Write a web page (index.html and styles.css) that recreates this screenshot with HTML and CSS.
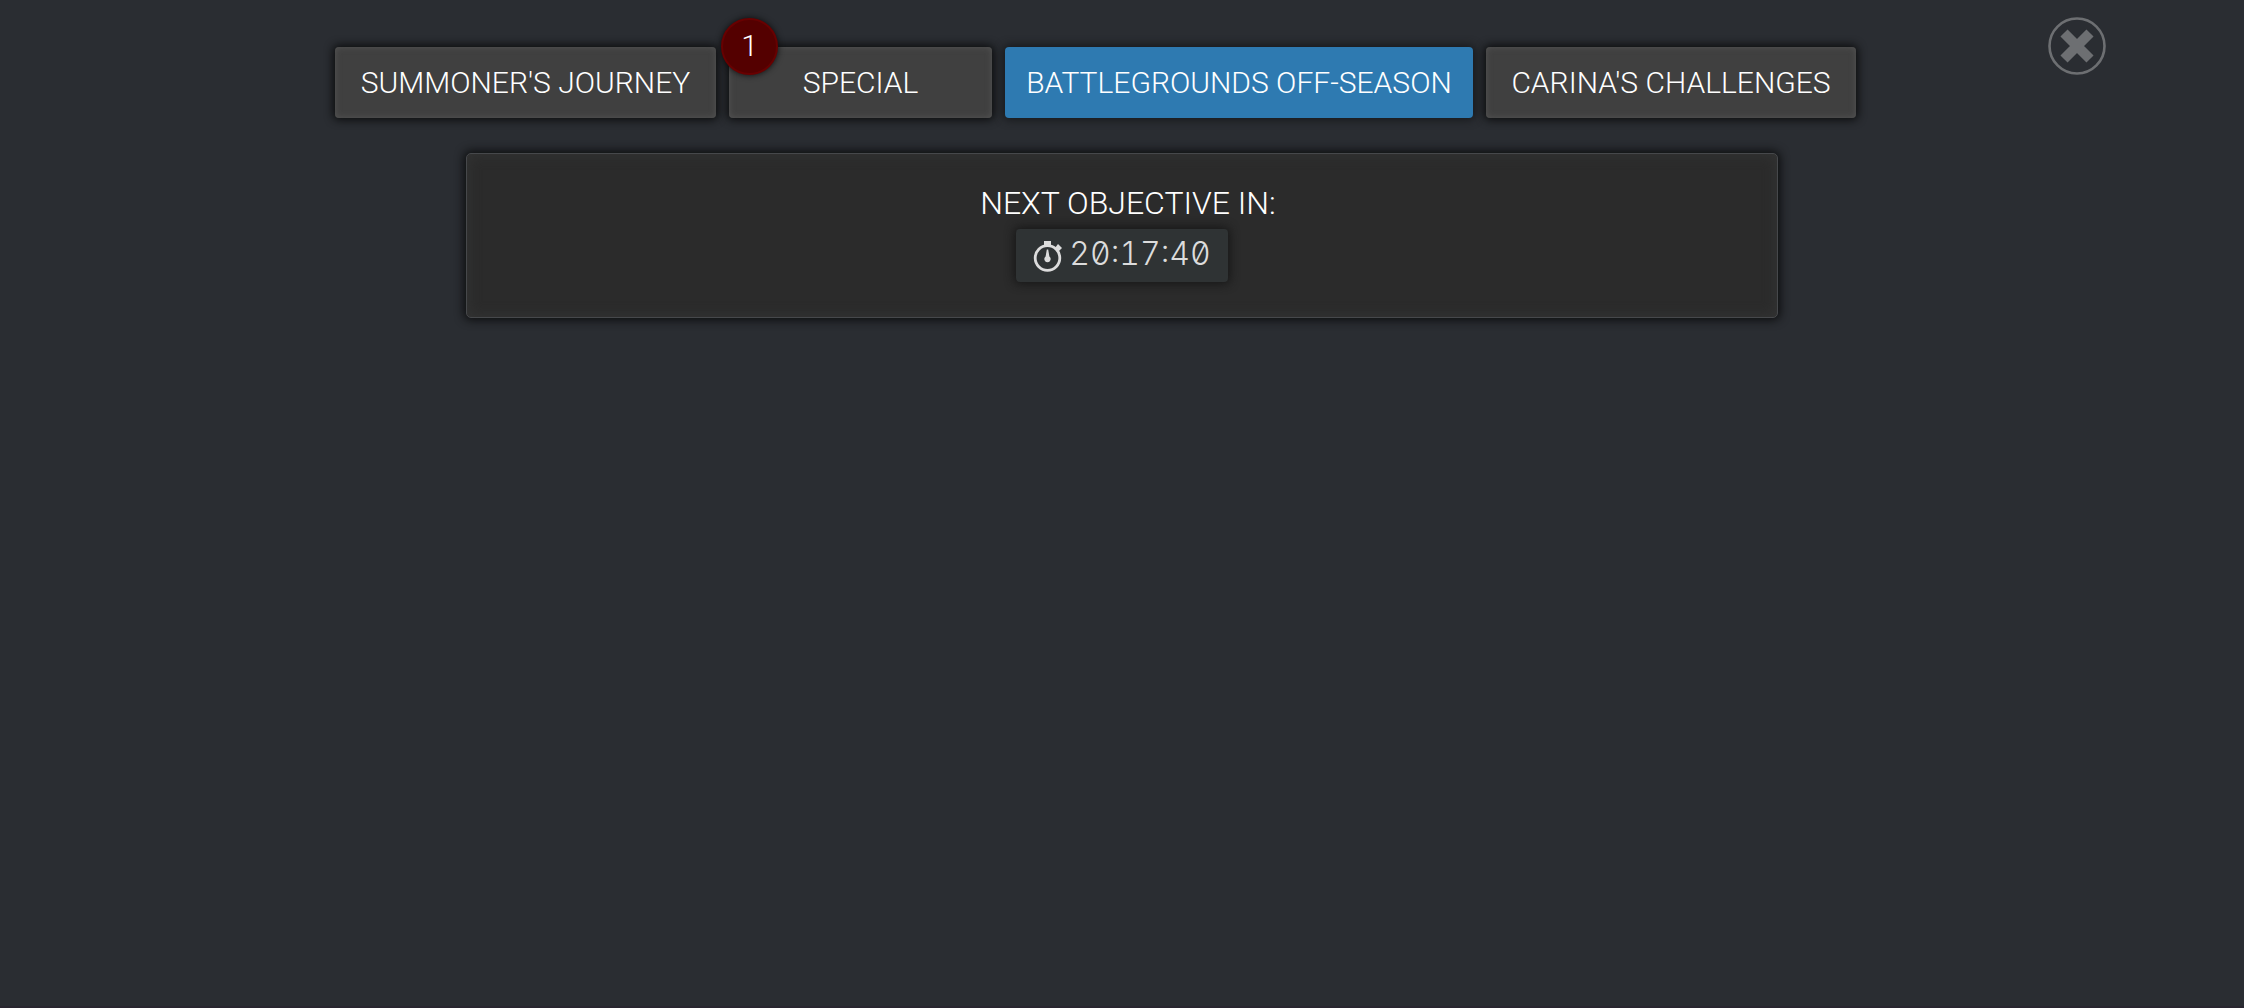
FILE: index.html
```html
<!DOCTYPE html>
<html lang="en">
<head>
    <meta charset="UTF-8">
    <meta name="viewport" content="width=device-width, initial-scale=1.0">
    <title>Objectives</title>
    <link rel="stylesheet" href="styles.css">
</head>
<body>
    <header class="top-bar">
        <nav class="tabs">
            <button class="tab" type="button">SUMMONER'S JOURNEY</button>
            <button class="tab" type="button">SPECIAL<span class="badge">1</span></button>
            <button class="tab active" type="button">BATTLEGROUNDS OFF-SEASON</button>
            <button class="tab" type="button">CARINA'S CHALLENGES</button>
        </nav>
        <button class="close-btn" type="button" aria-label="Close">
            <svg viewBox="0 0 58 58">
                <circle cx="29" cy="29" r="27.5" fill="none" stroke="currentColor" stroke-width="2.6"/>
                <path d="M16 16L42 42M42 16L16 42" stroke="currentColor" stroke-width="10"/>
            </svg>
        </button>
    </header>
    <main class="panel">
        <h1>NEXT OBJECTIVE IN:</h1>
        <div class="timer">
            <svg class="stopwatch" viewBox="0 0 30 34">
                <circle cx="14.5" cy="19" r="12.3" fill="none" stroke="currentColor" stroke-width="2.8"/>
                <path d="M11 2h7v5h-7zM22 9l3-4 4 4-4 4z" fill="currentColor"/>
                <path d="M13.8 10.500h1.4l1.200 7a3.200 3.200 0 1 1-3.800 0z" fill="currentColor"/>
            </svg>
            <time>20:17:40</time>
        </div>
    </main>
</body>
</html>
```
FILE: styles.css
```css
* {
    box-sizing: border-box;
}

body {
    margin: 0;
    min-height: 100vh;
    font-family: Roboto, "Liberation Sans", sans-serif;
    font-weight: 300;
    color: #fff;
    background-color: #2a2d32;
    border-bottom: 2px solid #292630;
}

button {
    font: inherit;
    color: inherit;
    border: none;
    cursor: pointer;
}

.top-bar {
    display: flex;
    align-items: flex-start;
    padding: 17px 138px 0 143px;
}

.tabs {
    flex: 1;
    display: grid;
    grid-template-columns: 381px 263px 468px 370px;
    justify-content: center;
    gap: 13px;
    padding-top: 30px;
}

.tab {
    position: relative;
    height: 71px;
    padding: 0;
    font-size: 30px;
    white-space: nowrap;
    background-color: #404040;
    border-radius: 4px;
    box-shadow: 0 0 8px 2px #0c0d0e, inset 0 0 6px #555;
}

.tab.active {
    background-color: #2e7ab1;
    box-shadow: 0 0 8px 2px #17191c;
}

.badge {
    position: absolute;
    top: -29px;
    left: -8px;
    width: 57px;
    height: 57px;
    line-height: 52px;
    background-color: #540000;
    border: 2px solid #680000;
    border-radius: 50%;
    box-shadow: 0 0 6px #0c0d0e;
}

.close-btn {
    width: 58px;
    height: 58px;
    padding: 0;
    color: #6d6f72;
    background: none;
}

.close-btn svg {
    display: block;
}

.panel {
    display: flex;
    flex-direction: column;
    align-items: center;
    width: 90%;
    max-width: 1312px;
    margin: 35px auto 0;
    padding: 30px 24px 35px;
    background-color: #2b2b2b;
    border: 1px solid #46484b;
    border-radius: 5px;
    box-shadow: 0 0 10px 2px #0c0d0e, inset 0 0 14px #343535;
}

h1 {
    margin: 0 0 7px;
    padding-left: 12px;
    font-size: 32px;
    font-weight: 300;
    line-height: 38px;
}

.timer {
    display: flex;
    align-items: center;
    gap: 6px;
    height: 53px;
    padding: 0 17px;
    color: #dcdcdc;
    background-color: #2f3334;
    border-radius: 4px;
    box-shadow: 0 0 10px 2px #171717;
}

.stopwatch {
    width: 30px;
    height: 34px;
}

.timer time {
    font-family: Inter, "Liberation Sans", sans-serif;
    font-size: 32px;
    line-height: 48px;
    padding-bottom: 4px;
    font-feature-settings: "zero", "tnum";
}
```
